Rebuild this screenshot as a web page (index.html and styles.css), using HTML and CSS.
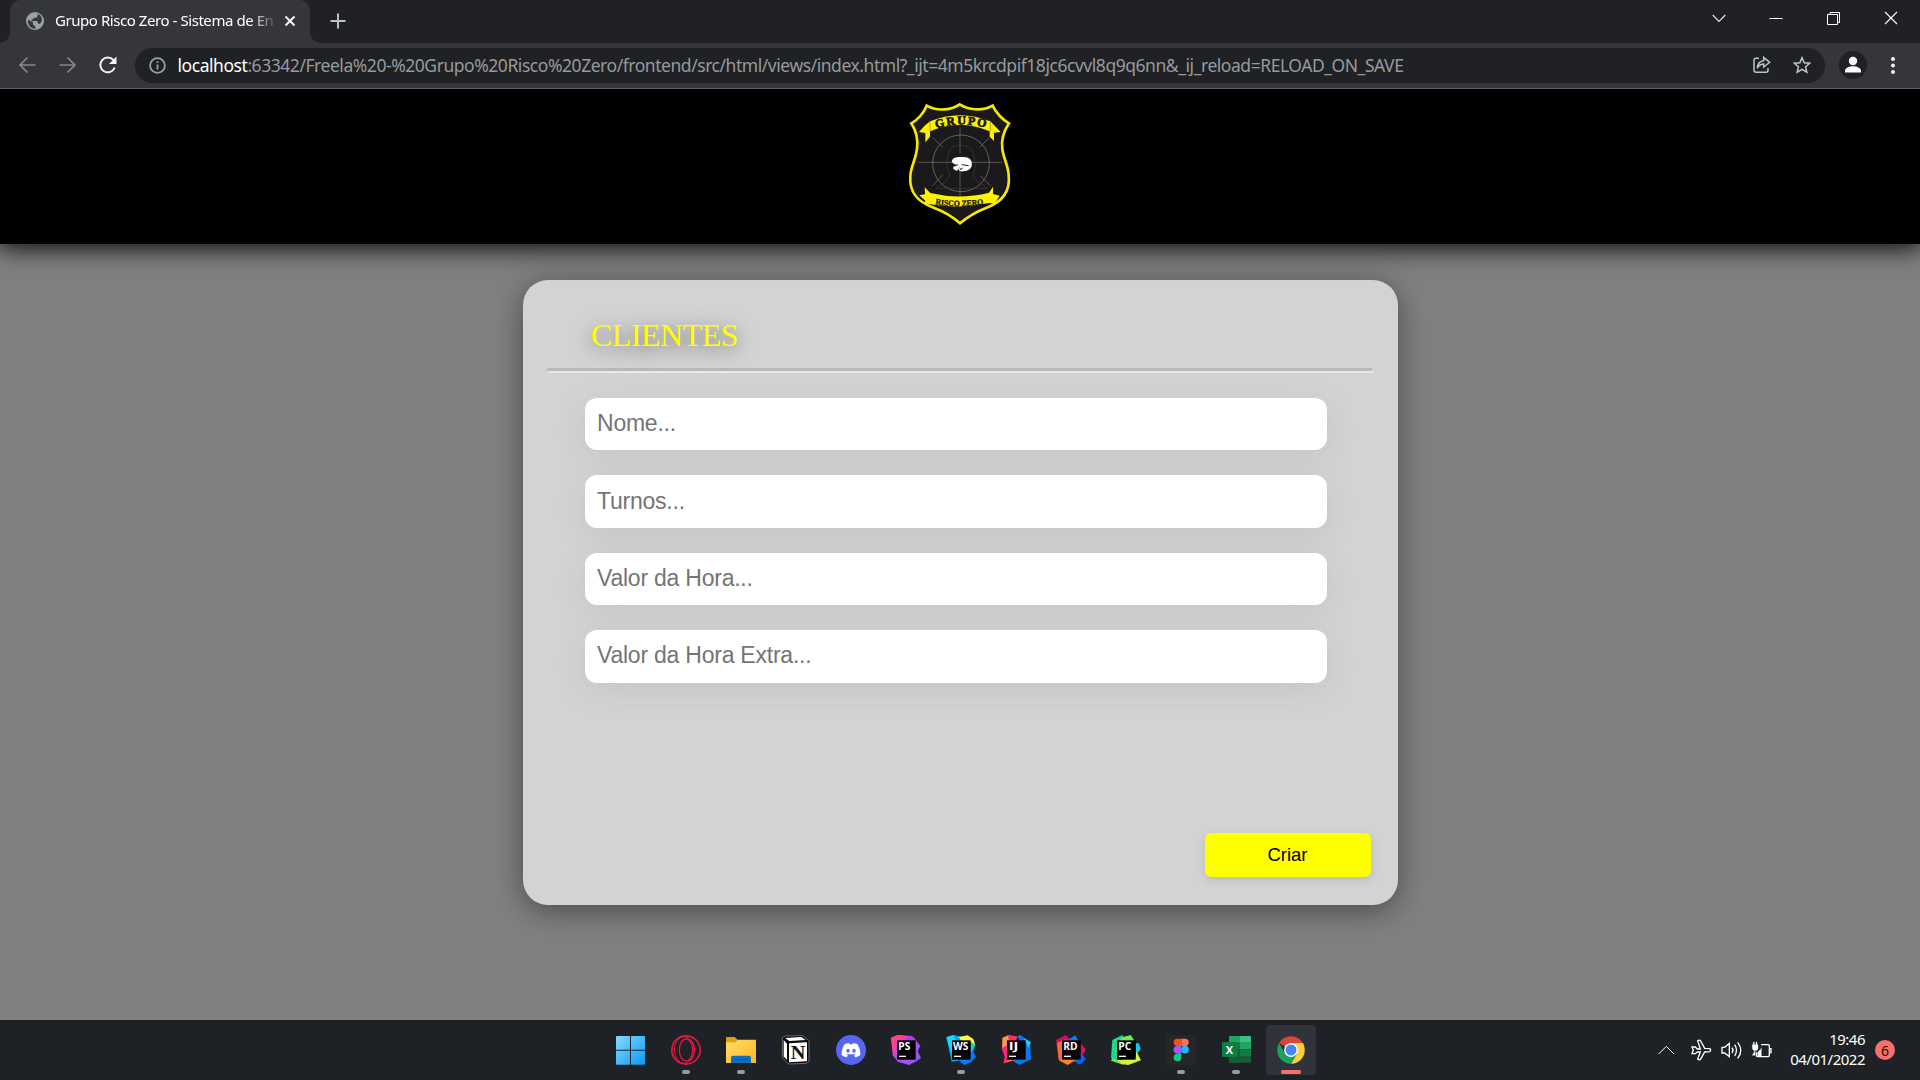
FILE: index.html
```
<!DOCTYPE html>
<html lang="pt-BR">
<head>
<meta charset="utf-8">
<title>Grupo Risco Zero</title>
<link rel="stylesheet" href="styles.css">
</head>
<body>
<div class="tabstrip">
  <div class="tab">
    <svg class="globe" width="18" height="18" viewBox="0 0 54 54"><circle cx="27" cy="27" r="27" fill="#9aa0a6"/><path d="M6 23L21 31V38L28 43V50C14 49 4 39 6 23ZM35 6V12Q34 17 29 17H23V22H17V27H33L37 35H42C47 32 49 23 47 18C45 11 40 8 35 6Z" fill="#35363a"/></svg>
    <span class="tab-title">Grupo Risco Zero - Sistema de En</span>
    <svg class="tab-close" width="12" height="12" viewBox="0 0 12 12"><path d="M1.5 1.5L10.5 10.5M10.5 1.5L1.5 10.5" stroke="#fff" stroke-width="1.9"/></svg>
  </div>
  <svg class="plus" width="16" height="16" viewBox="0 0 16 16"><path d="M8 .5V15.5M.5 8H15.5" stroke="#bdc1c6" stroke-width="2"/></svg>
  <div class="winctl">
    <svg width="14" height="14" viewBox="0 0 14 14"><path d="M.7 4L7 10.3L13.300 4" stroke="#e5e5e5" stroke-width="1.200" fill="none"/></svg>
    <svg width="14" height="14" viewBox="0 0 14 14"><path d="M.5 7.500H13.500" stroke="#fff"/></svg>
    <svg width="14" height="14" viewBox="0 0 14 14"><path d="M.5 3.500H10.500V13.500H.5ZM3 3V1.500H12.500V11.500H11" stroke="#fff" fill="none"/></svg>
    <svg width="14" height="14" viewBox="0 0 14 14"><path d="M1 1L13 13M13 1L1 13" stroke="#fff" stroke-width="1.100"/></svg>
  </div>
</div>
<div class="toolbar">
  <svg class="nav" width="100" height="18" viewBox="0 0 100 18"><path d="M17.500 9H2.500M9.500 1.500L2 9L9.500 16.500" fill="none" stroke="#85868a" stroke-width="1.700"/><path d="M41.500 9H56.500M49.500 1.500L57 9L49.500 16.500" fill="none" stroke="#85868a" stroke-width="1.700"/><path d="M95.500 4.200A7.400 7.400 0 1 0 96.700 11.500" fill="none" stroke="#f1f3f4" stroke-width="2"/><path d="M98.500 .5V8H91Z" fill="#f1f3f4"/></svg>
  <div class="omnibox">
    <svg width="17" height="17" viewBox="0 0 17 17"><circle cx="8.500" cy="8.500" r="7.400" fill="none" stroke="#9aa0a6" stroke-width="1.800"/><path d="M8.500 7.500V12.500M8.500 4.300V6.100" stroke="#9aa0a6" stroke-width="1.800"/></svg>
    <span class="url"><b>localhost</b>:63342/Freela%20-%20Grupo%20Risco%20Zero/frontend/src/html/views/index.html?_ijt=4m5krcdpif18jc6cvvl8q9q6nn&amp;_ij_reload=RELOAD_ON_SAVE</span>
    <svg class="share" width="18" height="18" viewBox="0 0 54 54"><path d="M18 7H9Q3 7 3 13V43Q3 49 9 49H39Q45 49 45 43V36M13 36C14 22 21 15 32 14V4L50 19L32 33V24C24 24 18 28 13 36Z" fill="none" stroke="#bdc1c6" stroke-width="4.500"/></svg>
    <svg class="star" width="18" height="18" viewBox="0 0 18 18"><path d="M9 1.700L11.200 6.700L16.700 7.200L12.600 10.800L13.800 16.200L9 13.300L4.200 16.200L5.400 10.800L1.300 7.200L6.800 6.700Z" fill="none" stroke="#c4c7cb" stroke-width="1.500"/></svg>
  </div>
  <svg class="avatar" width="28" height="28" viewBox="0 0 28 28"><circle cx="14" cy="14" r="14" fill="#202124"/><circle cx="14" cy="10" r="4.200" fill="#fff"/><path d="M6 21.500V20C6 16.500 11 15.200 14 15.200S22 16.500 22 20V21.500Z" fill="#fff"/></svg>
  <svg class="dots" width="4" height="17" viewBox="0 0 4 17"><g fill="#f1f3f4"><circle cx="2" cy="2" r="2"/><circle cx="2" cy="8.500" r="2"/><circle cx="2" cy="15" r="2"/></g></svg>
</div>

<header class="site-header">
  <svg width="140" height="150" viewBox="0 0 420 450">
    <path d="M209 43C188 58 144 67 110 47C102 68 82 91 64 100C81 127 85 150 81 177C76 215 62 228 61 259C57 311 87 337 131 353Q177 370 210 400Q245 370 290 353C332 337 362 310 356 256C355 226 341 208 337 177C333 150 341 124 357 100C338 90 317 67 308 47C274 66 233 58 209 43Z" fill="#1b191b" stroke="#f5e900" stroke-width="8"/>
    <g fill="none" stroke="#777" stroke-width="2"><circle cx="213" cy="220" r="85" stroke="#888"/><path d="M86 217H188M240 217H336M210 113V190M210 245V326M128 143L158 171M298 143L270 171M128 287L158 254M301 287L271 257"/><path d="M178 250C168 230 169 209 176 190C181 169 195 166 211 166C237 166 250 177 250 197C260 217 256 242 248 255C258 278 276 280 291 295H139C151 280 171 278 178 261Z" stroke="#403e40"/></g>
    <path d="M185 216C187 200 203 200 220 201C242 202 248 213 245 229C241 242 223 246 209 244L206 237L200 243L190 237V230L200 228Z" fill="#fff"/><path d="M187 225H204M215 224L236 227M209 233L213 239L218 233" stroke="#252325" stroke-width="3" fill="none"/>
    <path d="M104 107L120 94Q209 58 301 94L332 126L312 128V153L299 140V124Q209 85 120 124V140L106 157V129L87 126Z" fill="#fff100"/>
    <path d="M120 94V124M301 94V124" stroke="#8c8300" stroke-width="2"/>
    <path d="M104 292L121 309Q209 330 297 308L309 290V312L329 317L314 341L297 339Q209 357 121 343L101 341L106 332L88 316L105 313Z" fill="#fff100"/>
    <path id="top" d="M138 115Q214 93 292 114" fill="none"/><path id="bottom" d="M136 343Q209 355 290 342" fill="none"/>
    <text class="logo-top"><textPath href="#top" textLength="151">GRUPO</textPath></text>
    <text class="logo-bottom"><textPath href="#bottom" textLength="145" lengthAdjust="spacingAndGlyphs">RISCO ZERO</textPath></text>
  </svg>
</header>

<main class="page">
  <section class="card">
    <h1>CLIENTES</h1>
    <hr>
    <form class="form">
      <input type="text" placeholder="Nome...">
      <input type="text" placeholder="Turnos...">
      <input type="text" placeholder="Valor da Hora...">
      <input type="text" placeholder="Valor da Hora Extra...">
      <button type="button">Criar</button>
    </form>
  </section>
</main>

<footer class="taskbar">
  <svg width="0" height="0" class="defs"><defs>
    <linearGradient id="win" x2="1" y2="1"><stop stop-color="#83dcff"/><stop offset="1" stop-color="#0a98f5"/></linearGradient>
    <linearGradient id="fold" x2="1" y2="1"><stop stop-color="#ffdc6d"/><stop offset="1" stop-color="#fcb91c"/></linearGradient>
    <linearGradient id="ps" x2="1" y2="1"><stop stop-color="#ff318c"/><stop offset=".5" stop-color="#b74af7"/><stop offset="1" stop-color="#765af8"/></linearGradient>
  </defs></svg>
  <div class="apps">
    <div class="app"><svg viewBox="0 0 90 90"><path d="M2 3H42V44H0V5ZM45 3H85Q87 3 87 5V44H45ZM0 47H42V89H2Q0 89 0 87ZM45 47H87V87Q87 89 85 89H45Z" fill="url(#win)"/></svg></div>
    <div class="app run"><svg viewBox="0 0 90 90"><g fill="none" stroke="#e5173f"><circle cx="45" cy="45" r="42.500" stroke-width="5"/><ellipse cx="40" cy="45" rx="30" ry="40" stroke-width="3"/><ellipse cx="45" cy="45" rx="20" ry="33" stroke-width="4"/><path d="M52 13Q70 20 70 45T52 77" stroke-width="4"/></g></svg></div>
    <div class="app run"><svg viewBox="0 0 90 90"><path d="M0 10Q0 6 4 6H26L36 15V26H0Z" fill="#e2a00b"/><path d="M0 22H28L37 14H87Q90 14 90 18V84H0Z" fill="url(#fold)"/><path d="M15 84V69Q15 62 22 62H69Q75 62 75 69V84Z" fill="#0c70bf"/><path d="M25 74H65" stroke="#064b84" stroke-width="3"/></svg></div>
    <div class="app"><svg viewBox="0 0 90 90"><path d="M4 8L13 3L65 2L84 17V79L77 85L22 87L4 67Z" fill="#0a0a0a" stroke="#999" stroke-width="2"/><path d="M12 9L61 6L74 15L25 18Z" fill="#fff"/><path d="M24 25L78 22V79L24 82Z" fill="#fff"/><path d="M8 15L18 26V75L8 64Z" fill="#fff"/><text class="notion" x="29" y="71" textLength="44" lengthAdjust="spacingAndGlyphs">N</text></svg></div>
    <div class="app"><svg viewBox="0 0 90 90"><circle cx="45" cy="45" r="45" fill="#5865f2"/><path d="M26 27L38 24L41 28H49L52 24L64 27Q74 43 73 60Q66 66 58 67L54 61L60 58H30L36 61L32 67Q23 66 17 60Q16 43 26 27Z" fill="#fff"/><ellipse cx="36" cy="47" rx="5" ry="6" fill="#5865f2"/><ellipse cx="54" cy="47" rx="5" ry="6" fill="#5865f2"/></svg></div>
    <div class="app"><svg viewBox="0 0 90 90"><path d="M0 8L20 0L62 3L74 15L88 33L80 49L90 69L74 80L54 90L20 80L5 60Z" fill="url(#ps)"/><path d="M0 8L20 0L48 4L18 25L8 66Z" fill="#ff4190"/><path d="M48 4L67 5L75 17L45 18Z" fill="#a642ed"/><path d="M18 16H74V74H18Z" fill="#000"/><text x="22" y="45" class="jb" textLength="36" lengthAdjust="spacingAndGlyphs">PS</text><path d="M24 64H45" stroke="#fff" stroke-width="4"/></svg></div>
    <div class="app run"><svg viewBox="0 0 90 90"><path d="M1 7L22 0L48 5L37 77L17 80Z" fill="#07a5ef"/><path d="M1 7L22 0L35 25L16 53Z" fill="#12dafa"/><path d="M38 6L65 1L82 12L88 31L68 52Z" fill="#fcf84a"/><path d="M75 21L88 31L82 52L90 65L75 82L55 90L37 76Z" fill="#087cfa"/><path d="M75 21L88 31L75 52Z" fill="#21d789"/><path d="M18 16H74V74H18Z" fill="#000"/><text x="21" y="45" class="jb" textLength="46" lengthAdjust="spacingAndGlyphs">WS</text><path d="M24 64H45" stroke="#fff" stroke-width="4"/></svg></div>
    <div class="app"><svg viewBox="0 0 90 90"><path d="M4 8L23 0L48 8L25 39L3 45Z" fill="#fc9651"/><path d="M20 0L48 4L44 24L25 20Z" fill="#fe3158"/><path d="M48 4L58 0L87 20L90 73L55 90L35 77L60 20Z" fill="#0876f5"/><path d="M69 10L90 22L82 39Z" fill="#15cef6"/><path d="M2 40L19 31V75L7 86L11 65Z" fill="#f9287b"/><path d="M8 85L22 71L43 75Z" fill="#ff5c38"/><path d="M18 16H74V74H18Z" fill="#090006"/><text x="23" y="45" class="jb" textLength="29" lengthAdjust="spacingAndGlyphs">IJ</text><path d="M24 64H45" stroke="#fff" stroke-width="4"/></svg></div>
    <div class="app"><svg viewBox="0 0 90 90"><path d="M0 15L29 0L47 16L18 74L8 76Z" fill="#c90f5e"/><path d="M3 23L31 12L18 77L8 72Z" fill="#f26d3d"/><path d="M36 15L58 1L67 17Z" fill="#087cfa"/><path d="M72 25L90 43L77 65Z" fill="#d51265"/><path d="M73 51L90 73L72 89L49 77Z" fill="#0864ef"/><path d="M8 76L22 70L60 74L35 90Z" fill="#fd8224"/><path d="M18 16H74V74H18Z" fill="#0d0006"/><text x="22" y="45" class="jb" textLength="43" lengthAdjust="spacingAndGlyphs">RD</text><path d="M24 64H45" stroke="#fff" stroke-width="4"/></svg></div>
    <div class="app"><svg viewBox="0 0 90 90"><path d="M4 15L34 0L42 17L20 81L0 69Z" fill="#21d789"/><path d="M33 7L59 0L73 21L18 35Z" fill="#6eea5b"/><path d="M74 25H84L89 43L75 61Z" fill="#13c6ee"/><path d="M15 76L73 68L76 49L90 76L52 90L29 87Z" fill="#d7f43c"/><path d="M4 69L18 75L38 90L0 77Z" fill="#5ee76b"/><path d="M18 16H74V74H18Z" fill="#000"/><text x="22" y="45" class="jb" textLength="39" lengthAdjust="spacingAndGlyphs">PC</text><path d="M24 64H45" stroke="#fff" stroke-width="4"/></svg></div>
    <div class="app run"><svg viewBox="0 0 90 90"><rect width="90" height="90" rx="8" fill="#272626"/><path d="M46 11H34A11 11 0 0 0 34 33H46Z" fill="#f24e1e"/><path d="M46 11H57A11 11 0 0 1 57 33H46Z" fill="#ff7262"/><path d="M46 33H34A11 11 0 0 0 34 56H46Z" fill="#a259ff"/><circle cx="57" cy="44" r="11.500" fill="#1abcfe"/><path d="M46 56H34A11.500 11.500 0 1 0 46 68Z" fill="#0acf83"/></svg></div>
    <div class="app run"><svg viewBox="0 0 90 90"><path d="M24 5H57V83H28Q24 83 24 79Z" fill="#185c37"/><path d="M28 3H57V23H24V7Q24 3 28 3Z" fill="#21a366"/><path d="M57 3H87Q90 3 90 7V23H57Z" fill="#33c481"/><path d="M24 23H57V43H24Z" fill="#107c41"/><path d="M57 23H90V43H57Z" fill="#21a366"/><path d="M57 43H90V63H57Z" fill="#107c41"/><path d="M24 63H90V79Q90 83 86 83H24Z" fill="#185c37"/><rect x="3" y="21" width="47" height="45" rx="4" fill="#107c41"/><text x="14" y="56" class="xl">X</text></svg></div>
    <div class="app active"><svg viewBox="0 0 90 90"><g transform="translate(3.500 3.500)"><path d="M41.500 41.500L5.560 20.750A41.500 41.500 0 0 1 77.440 20.750L41.500 20.750Z" fill="#dc4437"/><path d="M41.500 20.750H77.440A41.500 41.500 0 0 1 41.500 83L59.470 51.880Z" fill="#ffcd42"/><path d="M5.560 20.750A41.500 41.500 0 0 0 41.500 83L59.470 51.880L41.500 41.500L23.530 51.880Z" fill="#1aa15f"/><circle cx="41.500" cy="41.500" r="20.700" fill="#fff"/><circle cx="41.500" cy="41.500" r="16.500" fill="#4488f4"/></g></svg></div>
  </div>
  <div class="tray">
    <svg width="116" height="24" viewBox="0 0 348 72" fill="none" stroke="#fff" stroke-width="3"><path d="M5 48L28 25L51 48"/><path d="M105 27H115L121 33H130L122 8Q127 4 131 9L143 31L158 32Q164 36 158 41L143 42L131 63Q127 68 122 63L130 42H121L115 47H105L109 37Z" stroke-width="4"/><path d="M195 28H203L217 16V56L203 45H195ZM225 29Q231 37 225 45M233 20Q244 37 233 54M242 13Q261 37 242 61" stroke-width="4"/><path d="M312 20H333Q337 20 337 24V52Q337 56 333 56H302Q298 56 298 52V43M337 32H342V44H337" stroke-width="4"/><path d="M286 20H303V29Q303 38 295 38Q286 38 286 29ZM289 12H292V22H289ZM297 12H300V22H297ZM294 38V52H286ZM306 38Q313 35 313 29V54H302V43Z" fill="#fff" stroke-width="1"/></svg>
    <div class="clock"><span>19:46</span><span class="date">04/01/2022</span></div>
    <span class="notif">6</span>
  </div>
</footer>
</body>
</html>
```
FILE: styles.css
```
* { box-sizing: border-box; }
body {
  margin: 0;
  width: 1920px;
  height: 1080px;
  overflow: hidden;
  display: flex;
  flex-direction: column;
  background: #808080;
  font-family: "Noto Sans", sans-serif;
}
svg { display: block; flex: none; }

.tabstrip {
  height: 43px;
  flex: none;
  display: flex;
  align-items: flex-start;
  padding-left: 10px;
  background: #202124;
  z-index: 2;
}
.tab {
  width: 300px;
  height: 43px;
  display: flex;
  align-items: center;
  padding: 0 14px 2px 16px;
  background: #35363a;
  border-radius: 10px 10px 0 0;
  position: relative;
}
.tab::before, .tab::after {
  content: "";
  position: absolute;
  bottom: 0;
  width: 10px;
  height: 10px;
}
.tab::before { left: -10px; background: radial-gradient(circle at 0 0, transparent 9.500px, #35363a 10px); }
.tab::after { right: -10px; background: radial-gradient(circle at 100% 0, transparent 9.500px, #35363a 10px); }
.tab-title {
  width: 221px;
  margin-left: 11px;
  padding-bottom: 1px;
  white-space: nowrap;
  font-size: 15px;
  letter-spacing: -0.440px;
  color: #fff;
  -webkit-mask-image: linear-gradient(90deg, #000 195px, transparent 223px);
  mask-image: linear-gradient(90deg, #000 195px, transparent 223px);
}
.tab-close { margin-left: 8px; }
.plus { margin: 13px 0 0 19.500px; }
.winctl { margin: 11px 22px 0 auto; display: flex; gap: 43.500px; }

.toolbar {
  height: 46px;
  flex: none;
  display: flex;
  align-items: center;
  padding: 0 22px 1px 18px;
  background: #35363a;
  border-bottom: 1px solid #626367;
  z-index: 2;
}
.omnibox {
  width: 1690px;
  height: 35px;
  margin-left: 17px;
  display: flex;
  align-items: center;
  padding: 0 14px 0 14px;
  border-radius: 18px;
  background: #202124;
}
.url {
  margin-left: 11.500px;
  flex: none;
  white-space: nowrap;
  font-size: 17.500px;
  letter-spacing: -0.453px;
  color: #969a9f;
}
.url b { font-weight: 400; color: #fff; }
.share { margin-left: auto; }
.star { margin-left: 22px; }
.avatar { margin-left: 14px; }
.dots { margin-left: auto; margin-right: 3px; }

.site-header {
  height: 155px;
  flex: none;
  display: flex;
  justify-content: center;
  padding-top: 1px;
  background: #000;
  box-shadow: 0 0 25px 3px #000;
  z-index: 1;
}
.logo-top { font: 700 36px "Liberation Serif", serif; fill: #151515; stroke: #151515; stroke-width: 2; }
.logo-bottom { font: 700 25px "Liberation Serif", serif; fill: #151515; stroke: #151515; stroke-width: 1; }

.page { flex: 1; padding-top: 36px; }
.card {
  width: 875px;
  height: 625px;
  margin: 0 auto;
  padding: 0 25px 0 24.500px;
  border-radius: 25px;
  background: #d3d3d3;
  box-shadow: 0 6px 30px rgba(0, 0, 0, .42);
}
h1 {
  height: 88px;
  margin: 0;
  padding: 37px 0 0 44px;
  font: 400 32px/37px "Liberation Serif", serif;
  letter-spacing: -0.500px;
  color: #ff0;
  text-shadow: 0 4px 18px rgba(0, 0, 0, .65);
}
hr {
  height: 5px;
  margin: 0;
  border-style: solid;
  border-color: #b9b9b9 #e8e8e8 #e8e8e8 #b9b9b9;
  border-width: 3px 1px 2px;
}
.form {
  display: flex;
  flex-direction: column;
  gap: 25px;
  padding: 25px 2px 0 38px;
}
.form input {
  width: 742px;
  height: 52.400px;
  padding: 0 12px 1px;
  border: 0;
  border-radius: 12px;
  background: #fff;
  font: 23px "Liberation Sans", sans-serif;
  letter-spacing: -0.230px;
  box-shadow: 0 8px 30px rgba(100, 110, 125, .12);
}
.form input::placeholder { color: #757575; }
.form button {
  align-self: flex-end;
  width: 166px;
  height: 44px;
  margin-top: 125px;
  padding: 0;
  border: 0;
  border-radius: 6px;
  background: #ff0;
  color: #000;
  font: 18.500px "Liberation Sans", sans-serif;
  box-shadow: 0 3px 10px rgba(0, 0, 0, .12);
}

.taskbar {
  height: 60px;
  flex: none;
  display: grid;
  grid-template-columns: 603px 715px 1fr;
  background: #1e2227;
}
.defs { position: absolute; }
.apps { grid-column: 2; display: flex; }
.app {
  width: 50px;
  height: 50px;
  margin: 5px 2.500px;
  display: grid;
  place-items: center;
  border-radius: 4px;
  position: relative;
}
.app svg { width: 30px; height: 30px; }
.app.active { background: #303339; }
.run::after, .active::after {
  content: "";
  position: absolute;
  left: 21px;
  bottom: 1px;
  width: 8px;
  height: 4px;
  border-radius: 2px;
  background: #9a9b9d;
}
.app.active::after { left: 15px; width: 20px; background: #f9706b; }
.notion { font: 700 58px "Liberation Serif", serif; fill: #111; }
.jb { font: 700 29px "Open Sans", sans-serif; fill: #fff; }
.xl { font: 700 33px "Open Sans", sans-serif; fill: #fff; }
.tray { grid-column: 3; display: flex; justify-content: flex-end; align-items: center; padding-right: 25px; }
.clock {
  width: 80px;
  margin: 0 10px 2px 12px;
  display: flex;
  flex-direction: column;
  align-items: flex-end;
  font-size: 15px;
  line-height: 20px;
  color: #fff;
  letter-spacing: -0.500px;
}
.notif {
  width: 20px;
  height: 20px;
  border-radius: 50%;
  background: #f9706b;
  color: #111;
  font-size: 14px;
  line-height: 21px;
  text-align: center;
}
```
